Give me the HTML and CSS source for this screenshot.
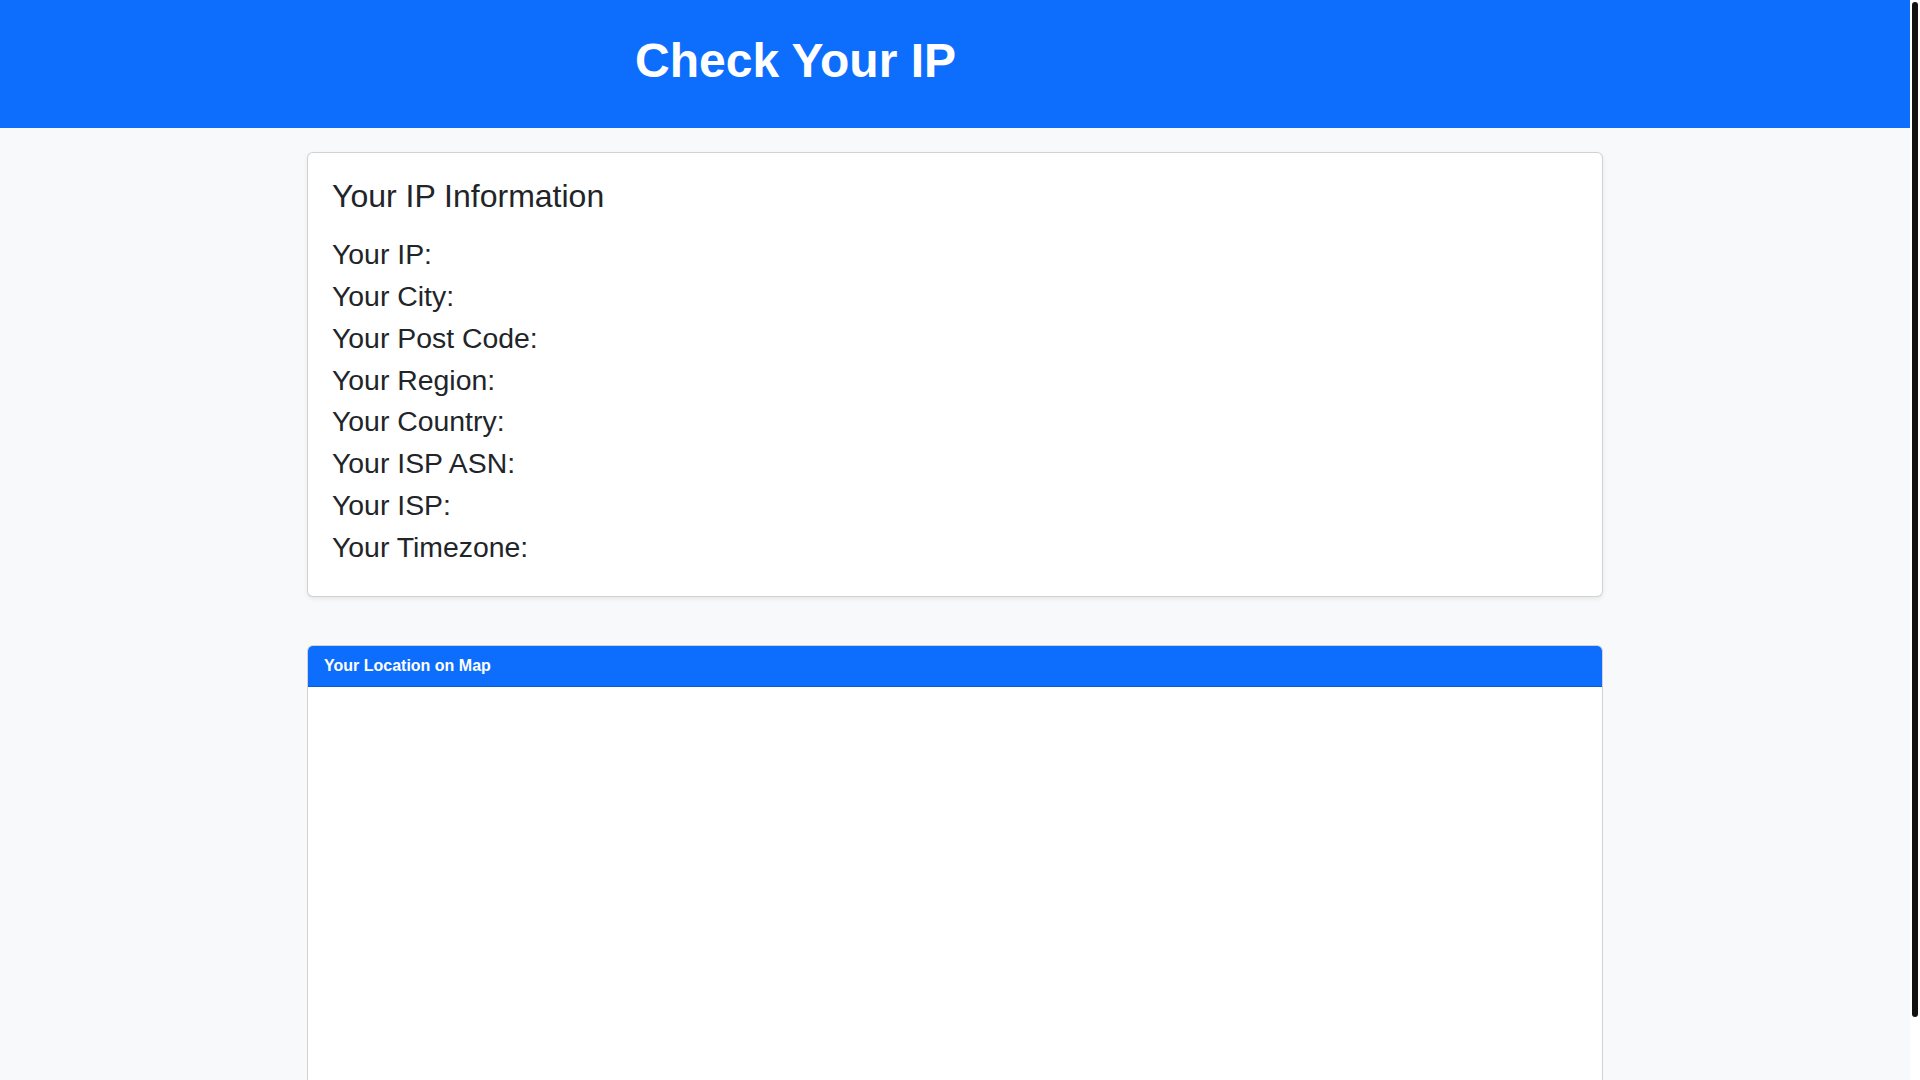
FILE: index.html
```html
<!DOCTYPE html>
<html lang="en">
<head>
<meta charset="utf-8">
<title>Check Your IP</title>
<link rel="stylesheet" href="styles.css">
</head>
<body>
<div class="page">
  <header class="site-header">
    <div class="container header-grid">
      <h1 class="site-title">Check Your IP</h1>
      <div class="header-spacer"></div>
    </div>
  </header>
  <main class="container main">
    <section class="card info-card">
      <div class="card-body info-body">
        <h2 class="info-title">Your IP Information</h2>
        <div class="info-list">
          <p class="info-item">Your IP: <span class="value"></span></p>
          <p class="info-item">Your City: <span class="value"></span></p>
          <p class="info-item">Your Post Code: <span class="value"></span></p>
          <p class="info-item">Your Region: <span class="value"></span></p>
          <p class="info-item">Your Country: <span class="value"></span></p>
          <p class="info-item">Your ISP ASN: <span class="value"></span></p>
          <p class="info-item">Your ISP: <span class="value"></span></p>
          <p class="info-item">Your Timezone: <span class="value"></span></p>
        </div>
      </div>
    </section>
    <section class="card map-card">
      <div class="card-header">Your Location on Map</div>
      <div class="card-body map-body">
        <div class="map"></div>
      </div>
    </section>
  </main>
</div>
<div class="scrollbar" aria-hidden="true"><div class="scrollbar-thumb"></div></div>
</body>
</html>
```
FILE: styles.css
```css
html, body {
  margin: 0;
  padding: 0;
}
body {
  background: #f8f9fa;
  color: #212529;
  font-family: "Liberation Sans", Arial, sans-serif;
  font-size: 16px;
  line-height: 1.5;
}
.page {
  margin-right: 10px;
}
.scrollbar {
  position: fixed;
  top: 0;
  right: 0;
  width: 10px;
  height: 100vh;
  background: #ffffff;
}
.scrollbar-thumb {
  margin: 2px 2px 0;
  height: 1015px;
  background: #111111;
  border-radius: 3px;
}
.container {
  box-sizing: border-box;
  max-width: 1320px;
  margin: 0 auto;
  padding: 0 12px;
}
.site-header {
  background: #0d6efd;
  color: #fff;
  height: 128px;
  box-sizing: border-box;
  padding-top: 32px;
}
.header-grid {
  display: grid;
  grid-template-columns: 1fr 1fr;
}
.site-title {
  justify-self: end;
  margin: 0 -1px 0 0;
  font-size: 48px;
  font-weight: 700;
  line-height: 1.2;
}
.main {
  padding-top: 24px;
  padding-bottom: 24px;
}
.card {
  background: #fff;
  border: 1px solid rgba(0, 0, 0, 0.175);
  border-radius: 6px;
}
.info-card {
  box-shadow: 0 2px 4px rgba(0, 0, 0, 0.075);
  margin-bottom: 48px;
}
.info-body {
  padding: 24px 24px 27px;
}
.info-title {
  margin: 0 0 19px;
  font-size: 32px;
  font-weight: 400;
  line-height: 1.2;
}
.info-item {
  margin: 0;
  font-size: 28.4px;
  line-height: 41.76px;
}
.map-card {
  overflow: hidden;
}
.card-header {
  background: #0d6efd;
  color: #fff;
  font-weight: 700;
  font-size: 16px;
  line-height: 24px;
  padding: 8px 16px;
  border-bottom: 1px solid rgba(0, 0, 0, 0.175);
}
.map-body {
  padding: 16px;
}
.map {
  height: 400px;
}
```
